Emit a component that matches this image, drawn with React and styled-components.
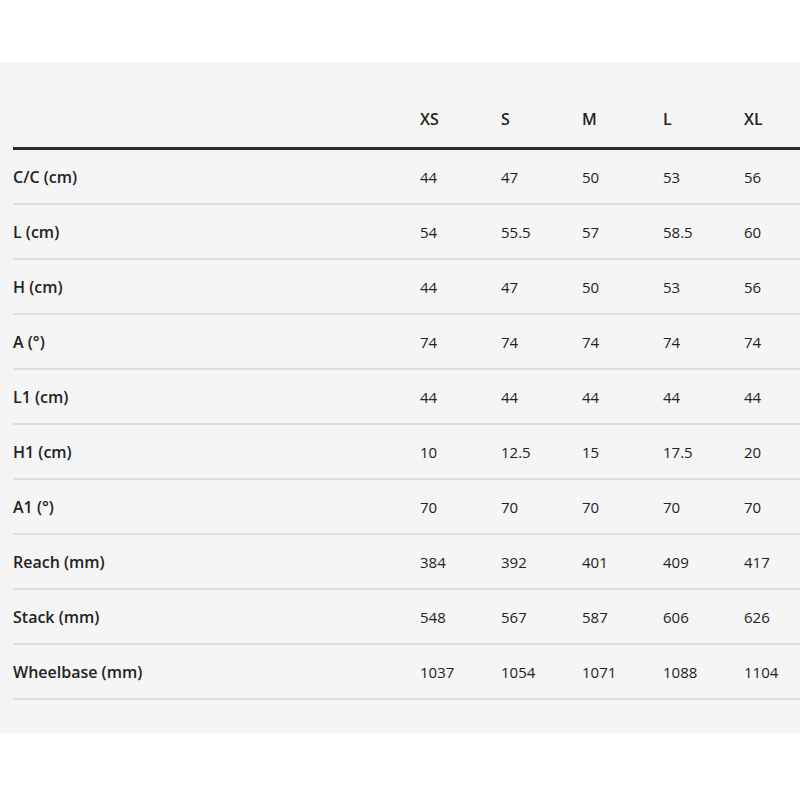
import React from "react"
import styled, { createGlobalStyle } from "styled-components"

const SIZES = ["XS", "S", "M", "L", "XL"]

const ROWS = [
  ["C/C (cm)", "44", "47", "50", "53", "56"],
  ["L (cm)", "54", "55.5", "57", "58.5", "60"],
  ["H (cm)", "44", "47", "50", "53", "56"],
  ["A (°)", "74", "74", "74", "74", "74"],
  ["L1 (cm)", "44", "44", "44", "44", "44"],
  ["H1 (cm)", "10", "12.5", "15", "17.5", "20"],
  ["A1 (°)", "70", "70", "70", "70", "70"],
  ["Reach (mm)", "384", "392", "401", "409", "417"],
  ["Stack (mm)", "548", "567", "587", "606", "626"],
  ["Wheelbase (mm)", "1037", "1054", "1071", "1088", "1104"],
]

const GlobalStyle = createGlobalStyle`
  body {
    margin: 0;
    background: #ffffff;
    font-family: "Open Sans", "Noto Sans", sans-serif;
    color: #222222;
  }
`

const Page = styled.div`
  padding-top: 62px;
`

const Panel = styled.div`
  background: #f5f5f5;
  padding: 0 0 33px 13px;
`

const Row = styled.div`
  display: grid;
  grid-template-columns: 407px repeat(4, 81px) 1fr;
  height: ${(p) => (p.$head ? "88px" : "55px")};
  align-items: ${(p) => (p.$head ? "end" : "center")};
  padding-bottom: ${(p) => (p.$head ? "17px" : "0")};
  box-sizing: border-box;
  border-bottom: ${(p) => (p.$head ? "3px solid #2b2b2b" : "2px solid #dedede")};
  font-size: 15px;
`

const Label = styled.div`
  font-size: 16px;
  font-weight: 600;
`

const Cell = styled.div`
  font-size: ${(p) => (p.$head ? "16px" : "15px")};
  font-weight: ${(p) => (p.$head ? 600 : 400)};
`

const App = () => {
  return (
    <Page>
      <GlobalStyle />
      <Panel>
        <Row $head>
          <Label />
          {SIZES.map((size) => (
            <Cell key={size} $head>
              {size}
            </Cell>
          ))}
        </Row>
        {ROWS.map((row) => (
          <Row key={row[0]}>
            <Label>{row[0]}</Label>
            {row.slice(1).map((value, index) => (
              <Cell key={index}>{value}</Cell>
            ))}
          </Row>
        ))}
      </Panel>
    </Page>
  )
}

export default App
